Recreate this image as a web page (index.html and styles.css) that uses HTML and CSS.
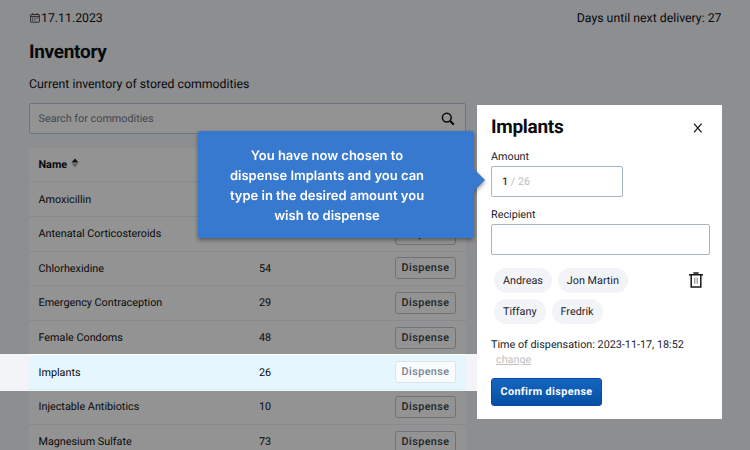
FILE: index.html
```
<!DOCTYPE html>
<html lang="en">
<head>
<meta charset="utf-8">
<title>Inventory</title>
<link rel="stylesheet" href="styles.css">
</head>
<body>
<div class="spotlight"></div>
<main class="page">
  <header class="topbar">
    <div class="date">
      <svg width="10" height="10" viewBox="0 0 10 10" fill="none" stroke="#222" stroke-width=".9"><rect x=".6" y="1.5" width="8.8" height="7.7" rx=".5"/><path d="M.6 3.4h8.8M2.7 0v2M7.3 0v2"/><path d="M2.2 5.1h1M4.5 5.1h1M6.8 5.1h1M2.2 7.1h1M4.5 7.1h1" stroke-width="1.1"/></svg>
      <span>17.11.2023</span>
    </div>
    <div>Days until next delivery: 27</div>
  </header>
  <h1>Inventory</h1>
  <p class="lead">Current inventory of stored commodities</p>
  <div class="search">
    <span>Search for commodities</span>
    <svg width="14" height="14" viewBox="0 0 14 14" fill="none" stroke="#0b0b0b"><circle cx="5.8" cy="5.6" r="4.4" stroke-width="1.5"/><path d="M9 8.8l3.8 3.9" stroke-width="2"/></svg>
  </div>
  <div class="table">
    <div class="row head"><span class="name">Name <svg width="8" height="10" viewBox="0 0 8 10"><path d="M.5 4.5L4 .4l3.5 4.1z" fill="#111"/><path d="M.7 5.5h6.6L4 9.3z" fill="#5c5c5d"/></svg></span></div>
    <div class="row"><span class="name">Amoxicillin</span></div>
    <div class="row"><span class="name">Antenatal Corticosteroids</span><span class="qty"></span><span class="btn">Dispense</span></div>
    <div class="row"><span class="name">Chlorhexidine</span><span class="qty">54</span><span class="btn">Dispense</span></div>
    <div class="row"><span class="name">Emergency Contraception</span><span class="qty">29</span><span class="btn">Dispense</span></div>
    <div class="row"><span class="name">Female Condoms</span><span class="qty">48</span><span class="btn">Dispense</span></div>
    <div class="row active"><span class="name">Implants</span><span class="qty">26</span><span class="btn">Dispense</span></div>
    <div class="row"><span class="name">Injectable Antibiotics</span><span class="qty">10</span><span class="btn">Dispense</span></div>
    <div class="row"><span class="name">Magnesium Sulfate</span><span class="qty">73</span><span class="btn">Dispense</span></div>
  </div>
</main>

<aside class="panel">
  <div class="panel-head">
    <h2>Implants</h2>
    <svg width="10" height="10" viewBox="0 0 10 10" fill="none" stroke="#181818" stroke-width="1.3"><path d="M1 .6l7.6 8.8M8.6.6L1 9.4"/></svg>
  </div>
  <label class="label">Amount</label>
  <div class="field amount"><b>1</b> / 26</div>
  <label class="label">Recipient</label>
  <div class="field"></div>
  <div class="people">
    <div class="chips"><span class="chip">Andreas</span><span class="chip">Jon Martin</span><span class="chip">Tiffany</span><span class="chip">Fredrik</span></div>
    <svg width="14" height="16" viewBox="0 0 14 16" fill="none" stroke="#171717" stroke-width="1.5"><path d="M0 2.7h14M4.3 1h5.4M2.2 2.7v12.4h9.6V2.7"/><path d="M5.8 5.6v6.2M8.2 5.6v6.2" stroke="#777" stroke-width="1"/></svg>
  </div>
  <p class="time">Time of dispensation: 2023-11-17, 18:52</p>
  <div class="change"><span>change</span></div>
  <div class="confirm">Confirm dispense</div>
</aside>

<div class="tooltip">You have now chosen to<br>dispense Implants and you can<br>type in the desired amount you<br>wish to dispense</div>
</body>
</html>
```
FILE: styles.css
```
* { box-sizing: border-box; }

body {
  position: relative;
  margin: 0;
  width: 750px;
  height: 450px;
  overflow: hidden;
  background: #8d8e90;
  font-family: Roboto, sans-serif;
  color: #08090b;
  text-rendering: geometricPrecision;
}

h1, h2, p { margin: 0; }
svg { display: block; flex: none; }

.page { position: relative; padding: 11px 28.5px 0 29px; }

.topbar {
  display: flex;
  justify-content: space-between;
  font-size: 12.3px;
  line-height: 17px;
}
.date { display: flex; align-items: center; gap: 1px; padding-left: 1px; }
.date svg { margin-top: -3px; }

h1 { margin-top: 12px; font-size: 19px; line-height: 24px; letter-spacing: -.3px; }
.lead { margin-top: 13px; font-size: 12.3px; line-height: 17px; }

.search {
  display: flex;
  align-items: center;
  justify-content: space-between;
  width: 437px;
  height: 31px;
  margin-top: 9.4px;
  padding: 0 10px 0 8.5px;
  border: 1px solid #6c757d;
  border-radius: 2px;
  background: #939393;
  color: #3f4650;
  font-size: 10.8px;
}

.table { width: 437px; margin-top: 13.2px; background: #939393; }
.row {
  display: flex;
  align-items: center;
  height: 34.65px;
  padding: 0 10px 0 9.5px;
  border-bottom: 1px solid #888a8c;
  font-size: 10.8px;
}
.name { width: 220.5px; }
.qty { flex: 1; }
.head { font-weight: 700; }
.head .name { display: flex; align-items: center; gap: 4px; }
.head svg { margin-top: -2px; }
.btn {
  width: 61px;
  height: 22px;
  border: 1px solid #6c737b;
  border-radius: 3px;
  font-size: 10.8px;
  font-weight: 500;
  line-height: 20px;
  letter-spacing: .4px;
  text-align: center;
  color: #202327;
}

.spotlight {
  position: absolute;
  left: 0;
  top: 354px;
  width: 477px;
  height: 37px;
  background: #f3f4f7;
}
.row.active {
  background: #e5f6fe;
  border-bottom-color: #e0eff7;
  box-shadow: 0 -1px #fff, 0 1px #e5f6fe;
  position: relative;
}
.active .btn { background: #fafbfd; border-color: #dfe4ea; color: #788292; }

.panel {
  position: absolute;
  left: 477px;
  top: 105px;
  width: 245px;
  height: 314px;
  padding: 10px 12px 0 14px;
  background: #fff;
  color: #20242c;
}
.panel-head {
  display: flex;
  align-items: center;
  justify-content: space-between;
  height: 24px;
  padding-right: 7px;
}
.panel-head svg { margin-top: 2px; }
h2 { font-size: 19px; line-height: 24px; letter-spacing: -.3px; color: #0c0d0f; }
.label { display: block; margin-top: 11px; font-size: 10.8px; line-height: 14px; }
.field {
  height: 31px;
  margin-top: 2px;
  border: 1px solid #a6b5c5;
  border-radius: 2px;
  font-size: 10.8px;
  line-height: 29px;
}
.field.amount { width: 132px; padding-left: 10px; color: #bdbdbd; }
.amount b { font-weight: 500; color: #333; }

.people { display: flex; justify-content: space-between; margin-top: 13px; padding: 0 7px 0 3px; }
.people svg { margin-top: 4px; }
.chips { display: flex; flex-wrap: wrap; gap: 6px; width: 150px; }
.chip {
  height: 25px;
  padding: 0 9px;
  border-radius: 13px;
  background: #f3f4f7;
  font-size: 10.8px;
  line-height: 25px;
}
.time { margin-top: 14px; font-size: 10.8px; line-height: 14px; white-space: nowrap; }
.change { padding-left: 5px; font-size: 10.8px; line-height: 15px; color: #bfbfbf; text-decoration: underline; }
.confirm {
  width: 111px;
  height: 28px;
  margin-top: 11px;
  border: 1px solid #0b45a5;
  border-radius: 3px;
  background: linear-gradient(#1565c0, #0650a3);
  color: #fff;
  font-size: 10.8px;
  font-weight: 700;
  line-height: 26px;
  letter-spacing: .4px;
  text-align: center;
}

.tooltip {
  position: absolute;
  left: 198px;
  top: 131px;
  width: 276px;
  height: 107px;
  padding: 15px 18px 0 0;
  border-radius: 2px;
  background: #3879d0;
  color: #fff;
  filter: drop-shadow(0 2px 2px rgba(0, 0, 0, .4));
  font: 600 13px/20px Inter, sans-serif;
  text-align: center;
}
.tooltip::after {
  content: "";
  position: absolute;
  left: 100%;
  top: 38px;
  border: 11px solid transparent;
  border-left-color: #3879d0;
  border-right: 0;
}
```
